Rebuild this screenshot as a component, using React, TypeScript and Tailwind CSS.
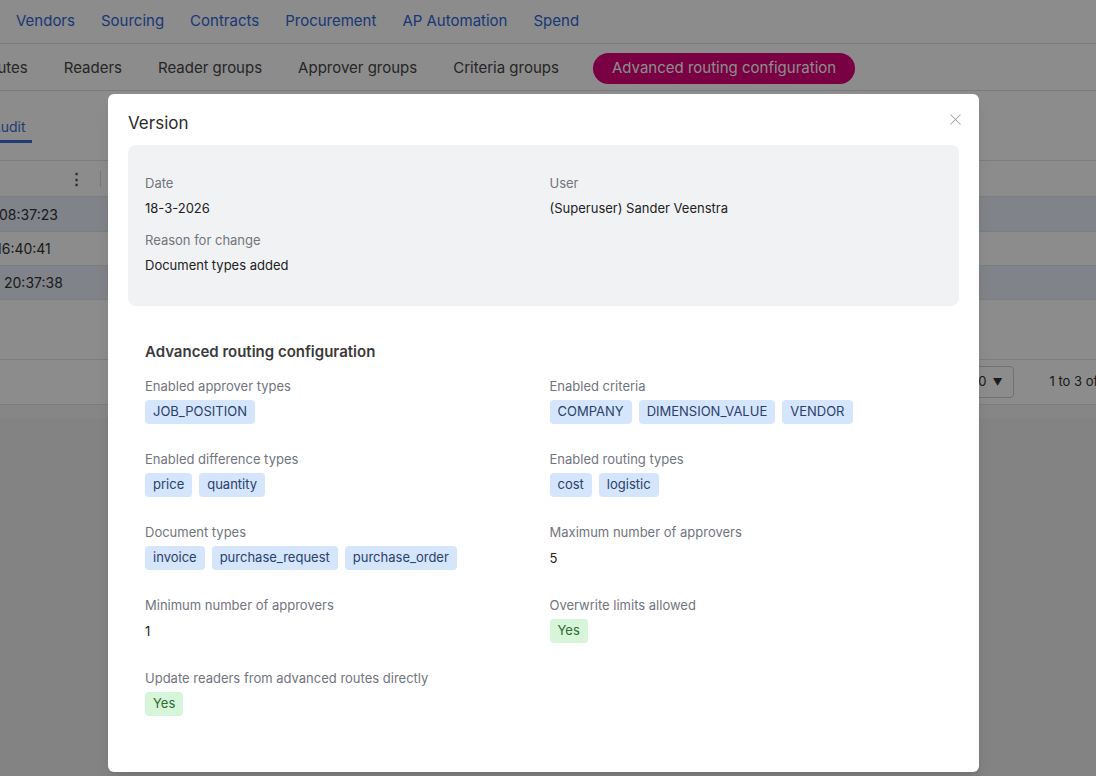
import { X } from 'lucide-react';

const topNav = ['Vendors', 'Sourcing', 'Contracts', 'Procurement', 'AP Automation', 'Spend'];
const subNav = ['Routes', 'Readers', 'Reader groups', 'Approver groups', 'Criteria groups'];

function Chip({ children, tone = 'blue' }: { children: React.ReactNode; tone?: 'blue' | 'green' }) {
  return (
    <span
      className={
        tone === 'blue'
          ? 'inline-flex h-6 items-center rounded-[4px] bg-[#d5e5fb] px-2 text-[13px] text-[#29416b]'
          : 'inline-flex h-6 items-center rounded-[4px] bg-[#d7f5d9] px-2 text-[13px] text-[#2f6b36]'
      }
    >
      {children}
    </span>
  );
}

function Field({ label, children }: { label: string; children: React.ReactNode }) {
  return (
    <div>
      <p className="text-[13px] leading-[18px] text-[#71757d]">{label}</p>
      <div className="mt-[5px] flex flex-wrap gap-[7px]">{children}</div>
    </div>
  );
}

function Value({ children }: { children: React.ReactNode }) {
  return <span className="text-[13px] leading-6 text-[#222]">{children}</span>;
}

// background page (dimmed by the overlay)
function Page() {
  return (
    <div className="flex h-full flex-col bg-[#eeeeee]">
      <div className="flex h-[44px] shrink-0 items-center gap-[26px] border-b border-[#dedede] bg-white px-4 text-[15px] text-[#2f66d6]">
        {topNav.map((n) => (
          <span key={n}>{n}</span>
        ))}
      </div>
      <div className="flex h-[47px] shrink-0 items-center gap-[36px] border-b border-[#dedede] bg-white pt-[2px] text-[15px] text-[#454545]">
        <span className="-ml-[21px]">{subNav[0]}</span>
        {subNav.slice(1).map((n) => (
          <span key={n}>{n}</span>
        ))}
        <span className="-ml-[2px] flex h-[31px] items-center rounded-full bg-[#dc0078] px-[19px] text-white">
          Advanced routing configuration
        </span>
      </div>
      <div className="flex flex-col bg-white">
        <div className="flex h-[70px] items-end border-b border-[#e3e3e3]">
          <div className="-ml-[16px] mb-[17px] border-b-[3px] border-[#3d6fd6] px-[7px] pb-[3px] text-[14px] text-[#3d6fd6]">
            Audit
          </div>
        </div>
        <div className="flex h-[36px] items-center border-b border-[#e3e3e3]">
          <span className="ml-[69px] text-[15px] font-bold leading-none text-[#555]">⋮</span>
          <span className="ml-[16px] h-4 w-px bg-[#dcdcdc]" />
        </div>
        <div className="flex h-[35px] items-center border-b border-[#e3e3e3] bg-[#e9eefa] text-[14px] text-[#333]">
          <span className="-ml-[1px]">08:37:23</span>
        </div>
        <div className="flex h-[34px] items-center border-b border-[#e3e3e3] text-[14px] text-[#333]">
          <span className="-ml-[4px]">16:40:41</span>
        </div>
        <div className="flex h-[34px] items-center border-b border-[#e3e3e3] bg-[#e9eefa] text-[14px] text-[#333]">
          <span className="ml-[4px]">20:37:38</span>
        </div>
        <div className="h-[60px] border-b border-[#e3e3e3]" />
        <div className="flex h-[45px] items-center justify-end gap-9 border-b border-[#e3e3e3] text-[13px] text-[#333]">
          <div className="flex h-[32px] w-[64px] items-center justify-end gap-[6px] rounded-[4px] border border-[#cfcfcf] pr-[10px]">
            <span>10</span>
            <span className="text-[10px]">▼</span>
          </div>
          <span className="-mr-[14px] whitespace-nowrap">1 to 3 of 3</span>
        </div>
      </div>
      <div className="h-[13px] bg-[#f5f5f5]" />
    </div>
  );
}

export default function App() {
  return (
    <div
      className="relative h-[776px] w-full overflow-hidden"
      style={{ fontFamily: 'Inter, "Noto Sans", sans-serif' }}
    >
      <Page />
      <div className="absolute inset-0 bg-black/45" />

      {/* Version dialog */}
      <div className="absolute left-[108px] top-[94px] flex h-[678px] w-[871px] flex-col rounded-[6px] bg-white px-5 pt-[17px] shadow-lg">
        <div className="flex items-center justify-between">
          <h2 className="text-[17px] leading-6 text-[#2b2b2b]">Version</h2>
          <X className="-mr-[6px] -mt-[8px] size-[19px] text-[#a0a0a0]" strokeWidth={1.3} />
        </div>

        <div className="mt-[10px] rounded-[8px] bg-[#f1f2f4] px-[17px] pb-[31px] pt-[29px]">
          <div className="grid grid-cols-2 gap-x-3">
            <div className="flex flex-col">
              <span className="text-[13px] leading-[18px] text-[#71757d]">Date</span>
              <span className="mt-[6px] text-[13px] leading-5 text-[#222]">18-3-2026</span>
              <span className="mt-[13px] text-[13px] leading-[18px] text-[#71757d]">Reason for change</span>
              <span className="mt-[6px] text-[13px] leading-5 text-[#222]">Document types added</span>
            </div>
            <div className="flex flex-col">
              <span className="text-[13px] leading-[18px] text-[#71757d]">User</span>
              <span className="mt-[6px] text-[13px] leading-5 text-[#222]">(Superuser) Sander Veenstra</span>
            </div>
          </div>
        </div>

        <div className="px-[17px] pt-9">
          <h3 className="text-[15px] font-semibold leading-5 text-[#3a3a3a]">Advanced routing configuration</h3>
          <div className="mt-[15px] grid grid-cols-2 gap-x-3 gap-y-[26px]">
            <Field label="Enabled approver types">
              <Chip>JOB_POSITION</Chip>
            </Field>
            <Field label="Enabled criteria">
              <Chip>COMPANY</Chip>
              <Chip>DIMENSION_VALUE</Chip>
              <Chip>VENDOR</Chip>
            </Field>
            <Field label="Enabled difference types">
              <Chip>price</Chip>
              <Chip>quantity</Chip>
            </Field>
            <Field label="Enabled routing types">
              <Chip>cost</Chip>
              <Chip>logistic</Chip>
            </Field>
            <Field label="Document types">
              <Chip>invoice</Chip>
              <Chip>purchase_request</Chip>
              <Chip>purchase_order</Chip>
            </Field>
            <Field label="Maximum number of approvers">
              <Value>5</Value>
            </Field>
            <Field label="Minimum number of approvers">
              <Value>1</Value>
            </Field>
            <Field label="Overwrite limits allowed">
              <Chip tone="green">Yes</Chip>
            </Field>
            <Field label="Update readers from advanced routes directly">
              <Chip tone="green">Yes</Chip>
            </Field>
          </div>
        </div>
      </div>
    </div>
  );
}
